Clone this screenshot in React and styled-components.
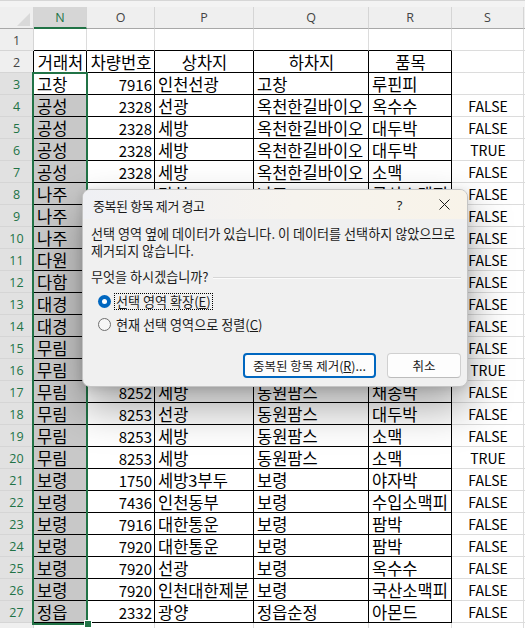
import React from 'react';
import styled, { createGlobalStyle, css } from 'styled-components';

const Global = createGlobalStyle`
  html, body { margin: 0; padding: 0; background: #fff; overflow: hidden; }
  body { font-family: "Noto Sans CJK KR", "Noto Sans", sans-serif; }
  #root { width: 525px; height: 628px; }
`;

const FONT = `"Noto Sans CJK KR", "Noto Sans", sans-serif`;
const GREEN = '#217346';
const GRID = '#dcdcdc';

const COLS = ['N', 'O', 'P', 'Q', 'R', 'S', ''];

const ROWS = [
  null,
  ['거래처', '차량번호', '상차지', '하차지', '품목', ''],
  ['고창', '7916', '인천선광', '고창', '루핀피', ''],
  ['공성', '2328', '선광', '옥천한길바이오', '옥수수', 'FALSE'],
  ['공성', '2328', '세방', '옥천한길바이오', '대두박', 'FALSE'],
  ['공성', '2328', '세방', '옥천한길바이오', '대두박', 'TRUE'],
  ['공성', '2328', '세방', '옥천한길바이오', '소맥', 'FALSE'],
  ['나주', '8261', '감천', '나주', '국산소맥피', 'FALSE'],
  ['나주', '', '', '', '', 'FALSE'],
  ['나주', '', '', '', '', 'FALSE'],
  ['다원', '', '', '', '', 'FALSE'],
  ['다함', '', '', '', '', 'FALSE'],
  ['대경', '', '', '', '', 'FALSE'],
  ['대경', '', '', '', '', 'FALSE'],
  ['무림', '', '', '', '', 'FALSE'],
  ['무림', '', '', '', '', 'TRUE'],
  ['무림', '8252', '세방', '동원팜스', '채종박', 'FALSE'],
  ['무림', '8253', '선광', '동원팜스', '대두박', 'FALSE'],
  ['무림', '8253', '세방', '동원팜스', '소맥', 'FALSE'],
  ['무림', '8253', '세방', '동원팜스', '소맥', 'TRUE'],
  ['보령', '1750', '세방3부두', '보령', '야자박', 'FALSE'],
  ['보령', '7436', '인천동부', '보령', '수입소맥피', 'FALSE'],
  ['보령', '7916', '대한통운', '보령', '팜박', 'FALSE'],
  ['보령', '7920', '대한통운', '보령', '팜박', 'FALSE'],
  ['보령', '7920', '선광', '보령', '옥수수', 'FALSE'],
  ['보령', '7920', '인천대한제분', '보령', '국산소맥피', 'FALSE'],
  ['정읍', '2332', '광양', '정읍순정', '아몬드', 'FALSE'],
  null,
];

const Wrap = styled.div`
  position: relative;
  width: 525px;
  height: 628px;
  overflow: hidden;
  background: #fff;
`;

const Sheet = styled.div`
  display: grid;
  grid-template-columns: 34px 53px 68px 99px 115px 83px 72px 1fr;
  grid-template-rows: 7px 22px;
  grid-auto-rows: 22px;
`;

const Strip = styled.div`
  grid-column: 1 / -1;
  background: #f3f3f3;
  border-top: 1px solid #d6d6d6;
  box-sizing: border-box;
`;

const Corner = styled.div`
  position: relative;
  background: #efefef;
  border-right: 1px solid #d5d5d5;
  border-bottom: 1px solid #a8a8a8;
  box-sizing: border-box;
  &::after {
    content: '';
    position: absolute;
    right: 3px;
    bottom: 2px;
    width: 13px;
    height: 13px;
    background: #d9d9d9;
    clip-path: polygon(100% 0, 100% 100%, 0 100%);
  }
`;

const ColHead = styled.div`
  display: flex;
  align-items: center;
  justify-content: center;
  box-sizing: border-box;
  background: ${p => (p.$sel ? '#d6d6d6' : '#efefef')};
  color: ${p => (p.$sel ? GREEN : '#444')};
  border-right: 1px solid #d5d5d5;
  border-bottom: ${p => (p.$sel ? `2px solid ${GREEN}` : '1px solid #a8a8a8')};
  font-family: "Open Sans", "Noto Sans", sans-serif;
  font-size: 12.5px;
  padding-top: ${p => (p.$sel ? '1px' : '0')};
`;

const RowHead = styled.div`
  display: flex;
  align-items: center;
  justify-content: center;
  box-sizing: border-box;
  background: ${p => (p.$sel ? '#e1e1e1' : '#efefef')};
  color: ${p => (p.$sel ? GREEN : '#444')};
  border-right: 1px solid ${p => (p.$edge ? '#000' : '#d5d5d5')};
  border-bottom: 1px solid #d5d5d5;
  font-family: "Open Sans", "Noto Sans", sans-serif;
  font-size: 12.5px;
  padding-top: 1px;
`;

const Cell = styled.div`
  display: flex;
  align-items: center;
  box-sizing: border-box;
  overflow: hidden;
  white-space: nowrap;
  padding: 1px 2px 0 3px;
  font-family: ${FONT};
  font-size: ${p => (p.$kind === 'num' ? '15px' : p.$kind === 'bool' ? '14px' : '16.5px')};
  line-height: 1;
  color: #000;
  background: ${p => (p.$fill ? '#c8c8c8' : '#fff')};
  border-right: 1px solid ${p => (p.$rb ? '#000' : GRID)};
  border-bottom: 1px solid ${p => (p.$bb ? '#000' : GRID)};
  justify-content: ${p =>
    p.$align === 'right' ? 'flex-end' : p.$align === 'center' ? 'center' : 'flex-start'};
`;

const Selection = styled.div`
  position: absolute;
  left: 32px;
  top: 72px;
  width: 56px;
  height: 553px;
  box-sizing: border-box;
  border: 2px solid ${GREEN};
  pointer-events: none;
`;

const FillHandle = styled.div`
  position: absolute;
  left: 84px;
  top: 620px;
  width: 6px;
  height: 6px;
  background: ${GREEN};
  border: 1px solid #fff;
`;

/* ---------- Dialog ---------- */

const Dialog = styled.div`
  position: absolute;
  left: 82px;
  top: 189px;
  width: 386px;
  height: 198px;
  box-sizing: border-box;
  border: 1px solid #c4c4c4;
  border-radius: 8px;
  background: #f0f0f0;
  box-shadow: 0 20px 44px rgba(0, 0, 0, 0.36), 0 2px 8px rgba(0, 0, 0, 0.12);
  display: flex;
  flex-direction: column;
  overflow: hidden;
  font-family: ${FONT};
  color: #1a1a1a;
`;

const TitleBar = styled.div`
  height: 29px;
  flex: none;
  display: flex;
  align-items: center;
  background: linear-gradient(90deg, #eff0f4 0%, #f6f3ee 55%, #f8f3e9 100%);
`;

const Title = styled.div`
  flex: 1;
  padding-left: 10px;
  font-size: 13px;
  letter-spacing: -0.4px;
  padding-top: 1px;
`;

const CaptionButton = styled.div`
  width: 45px;
  height: 29px;
  display: flex;
  align-items: center;
  justify-content: center;
  font-family: "Noto Sans", sans-serif;
  font-size: 13px;
  color: #1a1a1a;
`;

const Body = styled.div`
  flex: 1;
  display: flex;
  flex-direction: column;
  padding: 6px 6px 0 8px;
  font-size: 13.1px;
`;

const Message = styled.div`
  line-height: 17px;
  white-space: nowrap;
`;

const Question = styled.div`
  display: flex;
  align-items: center;
  gap: 4px;
  margin-top: 9px;
  line-height: 17px;
`;

const Groove = styled.div`
  flex: 1;
  height: 1px;
  background: #d6d6d6;
  border-bottom: 1px solid #fbfbfb;
  margin-top: 3px;
`;

const Options = styled.div`
  display: flex;
  flex-direction: column;
  gap: 6px;
  margin-top: 8px;
  padding-left: 7px;
`;

const Option = styled.div`
  display: flex;
  align-items: center;
  gap: 3px;
  height: 17px;
`;

const Radio = styled.span`
  width: 13px;
  height: 13px;
  box-sizing: border-box;
  border-radius: 50%;
  flex: none;
  position: relative;
  ${p =>
    p.$checked
      ? css`
          background: #0067c0;
          &::after {
            content: '';
            position: absolute;
            left: 4px;
            top: 4px;
            width: 5px;
            height: 5px;
            border-radius: 50%;
            background: #fff;
          }
        `
      : css`
          background: #f6f6f6;
          border: 1px solid #6f6f6f;
        `}
`;

const Label = styled.span`
  padding: 0 1px;
  line-height: 15px;
  border: 1px dotted ${p => (p.$focus ? '#000' : 'transparent')};
`;

const Key = styled.span`
  text-decoration: underline;
`;

const Buttons = styled.div`
  display: flex;
  justify-content: flex-end;
  gap: 11px;
  margin-top: auto;
  margin-bottom: 8px;
`;

const Button = styled.div`
  height: 25px;
  width: ${p => p.$w}px;
  box-sizing: border-box;
  display: flex;
  align-items: center;
  justify-content: center;
  background: #fdfdfd;
  border-radius: 4px;
  font-size: 12.5px;
  border: ${p => (p.$primary ? '2px solid #0067c0' : '1px solid #d0d0d0')};
  ${p => !p.$primary && css`border-bottom-color: #bcbcbc;`}
`;

function CloseIcon() {
  return (
    <svg width="11" height="11" viewBox="0 0 11 11">
      <path d="M0.5 0.5 L10.5 10.5 M10.5 0.5 L0.5 10.5" stroke="#1a1a1a" strokeWidth="1" fill="none" />
    </svg>
  );
}

export default function App() {
  const cells = [];
  cells.push(<Strip key="strip" />);
  cells.push(<Corner key="corner" />);
  COLS.forEach((c, i) => cells.push(<ColHead key={'h' + i} $sel={i === 0}>{c}</ColHead>));

  ROWS.forEach((row, ri) => {
    const r = ri + 1;
    const inTable = r >= 2 && r <= 27;
    const sel = r >= 3 && r <= 27;
    cells.push(
      <RowHead key={'r' + r} $sel={sel} $edge={inTable}>
        {r <= 27 ? r : ''}
      </RowHead>
    );
    for (let ci = 0; ci < 7; ci++) {
      let text = '';
      if (row && ci < 6) text = row[ci];
      const tableCol = ci <= 4;
      const rb = inTable && tableCol;
      const bb = tableCol && (inTable || r === 1);
      let align = 'left';
      let kind = 'text';
      if (r === 2 && ci <= 4) align = 'center';
      else if (ci === 1) {
        align = 'right';
        kind = 'num';
      } else if (ci === 5) {
        align = 'center';
        kind = 'bool';
      }
      const fill = ci === 0 && r >= 4 && r <= 27;
      cells.push(
        <Cell key={r + '-' + ci} $rb={rb} $bb={bb} $align={align} $fill={fill} $kind={kind}>
          {text}
        </Cell>
      );
    }
  });

  return (
    <Wrap>
      <Global />
      <Sheet>{cells}</Sheet>
      <Selection />
      <FillHandle />
      <Dialog>
        <TitleBar>
          <Title>중복된 항목 제거 경고</Title>
          <CaptionButton>?</CaptionButton>
          <CaptionButton>
            <CloseIcon />
          </CaptionButton>
        </TitleBar>
        <Body>
          <Message>
            선택 영역 옆에 데이터가 있습니다. 이 데이터를 선택하지 않았으므로
            <br />
            제거되지 않습니다.
          </Message>
          <Question>
            <span>무엇을 하시겠습니까?</span>
            <Groove />
          </Question>
          <Options>
            <Option>
              <Radio $checked />
              <Label $focus>
                선택 영역 확장(<Key>E</Key>)
              </Label>
            </Option>
            <Option>
              <Radio />
              <Label>
                현재 선택 영역으로 정렬(<Key>C</Key>)
              </Label>
            </Option>
          </Options>
          <Buttons>
            <Button $primary $w={133}>
              중복된 항목 제거(<Key>R</Key>)...
            </Button>
            <Button $w={74}>취소</Button>
          </Buttons>
        </Body>
      </Dialog>
    </Wrap>
  );
}
